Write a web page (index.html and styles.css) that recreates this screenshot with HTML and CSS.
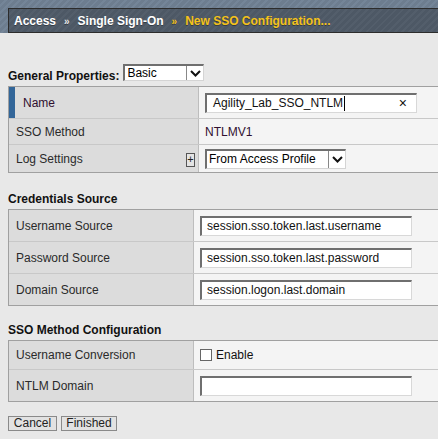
FILE: index.html
```html
<!DOCTYPE html>
<html>
<head>
<meta charset="utf-8">
<link rel="stylesheet" href="styles.css">
</head>
<body>
<div class="header">
  <div class="crumbs">
    <span class="crumb">Access</span>
    <span class="sep">»</span>
    <span class="crumb">Single Sign-On</span>
    <span class="sep cur">»</span>
    <span class="crumb cur">New SSO Configuration...</span>
  </div>
</div>
<div class="content">
  <div class="gp-row">
    <span class="gp-label">General Properties:</span>
    <span class="fsel gp-sel"><span class="fsel-text">Basic</span><span class="fsel-btn"><svg width="11" height="7" viewBox="0 0 11 7"><path d="M1 1 L5.5 5.5 L10 1" fill="none" stroke="#111" stroke-width="2"/></svg></span></span>
  </div>
  <div class="tbl t1">
    <div class="row r-name">
      <div class="lab req"><span class="req-bar"></span><span class="name-lab">Name</span></div>
      <div class="val"><span class="inp name-inp"><span class="txt">Agility_Lab_SSO_NTLM</span><span class="caret"></span><span class="clear">×</span></span></div>
    </div>
    <div class="row r-method">
      <div class="lab">SSO Method</div>
      <div class="val"><span class="plain">NTLMV1</span></div>
    </div>
    <div class="row r-log">
      <div class="lab log-lab"><span>Log Settings</span><span class="plus">+</span></div>
      <div class="val"><span class="fsel log-sel"><span class="fsel-text">From Access Profile</span><span class="fsel-btn"><svg width="11" height="7" viewBox="0 0 11 7"><path d="M1 1 L5.5 5.5 L10 1" fill="none" stroke="#111" stroke-width="2"/></svg></span></span></div>
    </div>
  </div>

  <div class="sec-title cred-title">Credentials Source</div>
  <div class="tbl t2">
    <div class="row r32">
      <div class="lab">Username Source</div>
      <div class="val"><span class="inp src-inp">session.sso.token.last.username</span></div>
    </div>
    <div class="row r32">
      <div class="lab">Password Source</div>
      <div class="val"><span class="inp src-inp">session.sso.token.last.password</span></div>
    </div>
    <div class="row r32">
      <div class="lab">Domain Source</div>
      <div class="val"><span class="inp src-inp">session.logon.last.domain</span></div>
    </div>
  </div>

  <div class="sec-title sso-title">SSO Method Configuration</div>
  <div class="tbl t2">
    <div class="row r-conv">
      <div class="lab">Username Conversion</div>
      <div class="val"><span class="chk"></span><span class="chk-lab">Enable</span></div>
    </div>
    <div class="row r32">
      <div class="lab">NTLM Domain</div>
      <div class="val"><span class="inp src-inp"></span></div>
    </div>
  </div>

  <div class="buttons">
    <span class="btn btn-cancel">Cancel</span>
    <span class="btn btn-fin">Finished</span>
  </div>
</div>
</body>
</html>
```
FILE: styles.css
```css
html, body {
  margin: 0;
  padding: 0;
}
body {
  background: #e8e8e8;
  font-family: "Liberation Sans", Arial, sans-serif;
  font-size: 12px;
  color: #222;
  width: 438px;
  height: 439px;
  overflow: hidden;
}
.header {
  height: 33px;
  box-sizing: border-box;
  padding: 8px 0 0 8px;
  background: repeating-linear-gradient(135deg, #6d7d8f 0, #6d7d8f 3px, #748598 3px, #748598 5px);
}
.crumbs {
  height: 25px;
  box-sizing: border-box;
  border: 1px solid #2c2c2c;
  border-right: none;
  background: repeating-linear-gradient(135deg, #4d5865 0, #4d5865 3px, #535e6b 3px, #535e6b 5px);
  display: flex;
  align-items: center;
  padding-left: 5px;
  font-weight: bold;
  font-size: 12px;
  color: #fff;
  white-space: nowrap;
  text-shadow: 0 1px 0 rgba(0,0,0,0.35);
}
.sep {
  font-size: 10px;
  margin: 2px 8px 0 8px;
  color: #e8e8e8;
}
.cur {
  color: #f5c21a;
}
.content {
  padding: 0 0 0 8px;
}
.gp-row {
  height: 53px;
  box-sizing: border-box;
  padding-top: 31px;
  display: flex;
  align-items: flex-start;
}
.gp-label {
  font-weight: bold;
  font-size: 12px;
  color: #111;
  margin-top: 5px;
  margin-right: 4px;
}
.fsel {
  display: inline-flex;
  box-sizing: border-box;
  background: #fff;
  border-top: 2px solid #6f6f6f;
  border-left: 2px solid #6f6f6f;
  border-right: 1px solid #d4d4d4;
  border-bottom: 1px solid #d4d4d4;
  align-items: stretch;
}
.gp-sel {
  width: 81px;
  height: 17px;
}
.fsel-text {
  flex: 1;
  padding-left: 2px;
  line-height: 14px;
  font-size: 12px;
  color: #000;
}
.fsel-btn {
  width: 17px;
  box-sizing: border-box;
  border-left: 1px solid #888;
  background: #fff;
  display: flex;
  align-items: center;
  justify-content: center;
}
.tbl {
  border-top: 1px solid #a0a0a0;
  border-bottom: 1px solid #a0a0a0;
  border-left: 1px solid #a0a0a0;
}
.row {
  display: grid;
  grid-template-columns: 190px 1fr;
  border-bottom: 1px solid #c8c8c8;
}
.row:last-child {
  border-bottom: none;
}
.t2 .row {
  grid-template-columns: 185px 1fr;
}
.lab {
  background: #dcdcdc;
  border-right: 1px solid #bdbdbd;
  display: flex;
  align-items: center;
  padding-left: 7px;
  color: #2a2a2a;
  font-size: 12px;
}
.val {
  background: #f4f4f4;
  display: flex;
  align-items: center;
  padding-left: 6px;
}
.r-name {
  height: 31px;
}
.r-method {
  height: 25px;
}
.r-log {
  height: 27px;
}
.req {
  padding-left: 0;
}
.req-bar {
  align-self: stretch;
  width: 6px;
  background: #336699;
  margin-right: 8px;
}
.name-lab {
  color: #301030;
}
.plain {
  color: #301030;
  font-size: 12px;
}
.log-lab {
  justify-content: space-between;
  padding-right: 3px;
}
.plus {
  width: 9px;
  height: 14px;
  box-sizing: border-box;
  border: 1px solid #555;
  background: #e4e4e4;
  font-size: 11px;
  line-height: 11px;
  text-align: center;
  color: #222;
  margin-top: 3px;
}
.inp {
  display: inline-flex;
  align-items: center;
  box-sizing: border-box;
  background: #fff;
  border-top: 2px solid #6f6f6f;
  border-left: 2px solid #6f6f6f;
  border-right: 1px solid #d8d8d8;
  border-bottom: 1px solid #d8d8d8;
  color: #000;
  font-size: 12px;
  white-space: nowrap;
}
.name-inp {
  width: 212px;
  height: 20px;
  padding-left: 6px;
}
.name-inp .txt {
  color: #111;
}
.caret {
  width: 1px;
  height: 15px;
  background: #000;
  margin-left: 1px;
}
.clear {
  margin-left: auto;
  margin-right: 9px;
  font-size: 14px;
  color: #111;
  line-height: 14px;
}
.log-sel {
  width: 141px;
  height: 20px;
}
.log-sel .fsel-text {
  line-height: 16px;
}
.sec-title {
  font-weight: bold;
  font-size: 12px;
  color: #111;
  box-sizing: border-box;
}
.cred-title {
  height: 36px;
  padding-top: 19px;
}
.sso-title {
  height: 34px;
  padding-top: 17px;
}
.r32 {
  height: 31px;
}
.r-conv {
  height: 28px;
}
.src-inp {
  width: 212px;
  height: 20px;
  padding-left: 5px;
  color: #111;
}
.chk {
  width: 12px;
  height: 12px;
  box-sizing: border-box;
  border: 1px solid #666;
  background: #fff;
  margin-right: 4px;
}
.chk-lab {
  font-size: 12px;
  color: #111;
}
.buttons {
  display: flex;
  gap: 4px;
  margin-top: 14px;
}
.btn {
  display: inline-block;
  box-sizing: border-box;
  height: 15px;
  line-height: 13px;
  border: 1px solid #8a8a8a;
  background: #e2e2e2;
  color: #222;
  font-size: 12px;
  text-align: center;
}
.btn-cancel {
  width: 49px;
}
.btn-fin {
  width: 56px;
}
```
